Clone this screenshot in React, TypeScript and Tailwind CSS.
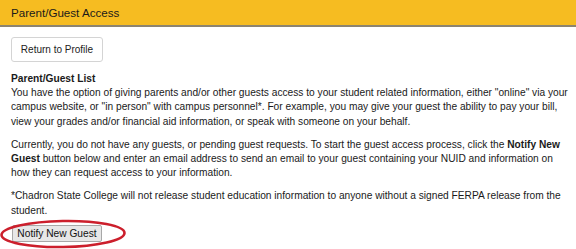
import React from "react";

export default function App() {
  return (
    <div
      className="relative w-[576px] h-[249px] overflow-hidden bg-white text-[#1a1a1a]"
      style={{ fontFamily: '"Liberation Sans", Arial, sans-serif' }}
    >
      <div className="h-[27px] bg-[#f6bc21] border-b-[2px] border-[#8c8470] flex items-center px-[11px]">
        <span className="text-[11.6px] text-[#1a1a1a]">Parent/Guest Access</span>
      </div>
      <div className="pl-[11px] pt-[10px]">
        <button className="h-[25px] w-[92px] rounded-[3px] border border-[#d4d4d4] bg-white text-[10px] text-[#222] flex items-center justify-center">
          Return to Profile
        </button>
        <div className="mt-[10px] text-[10.2px] leading-[14.2px] whitespace-nowrap">
          <div className="font-bold">Parent/Guest List</div>
          <p>
            You have the option of giving parents and/or other guests access to your student related information, either "online" via your
            <br />
            campus website, or "in person" with campus personnel*. For example, you may give your guest the ability to pay your bill,
            <br />
            view your grades and/or financial aid information, or speak with someone on your behalf.
          </p>
          <p className="mt-[9px]">
            Currently, you do not have any guests, or pending guest requests. To start the guest access process, click the <b>Notify New</b>
            <br />
            <b>Guest</b> button below and enter an email address to send an email to your guest containing your NUID and information on
            <br />
            how they can request access to your information.
          </p>
          <p className="mt-[9px]">
            *Chadron State College will not release student education information to anyone without a signed FERPA release from the
            <br />
            student.
          </p>
        </div>
        <div className="mt-[7px] flex">
          <button className="ml-[1px] h-[17px] w-[90px] rounded-[2px] border border-[#a8a8a8] bg-[#e7e7e7] text-[10.2px] text-[#111] flex items-center justify-center">
            Notify New Guest
          </button>
        </div>
      </div>
      <svg
        className="absolute left-0 top-[219px]"
        width="128"
        height="31"
        viewBox="0 0 128 31"
      >
        <ellipse
          cx="63"
          cy="15"
          rx="61.5"
          ry="13"
          fill="none"
          stroke="#cc1f2c"
          strokeWidth="2.6"
          transform="rotate(-1 63 15)"
        />
      </svg>
    </div>
  );
}
